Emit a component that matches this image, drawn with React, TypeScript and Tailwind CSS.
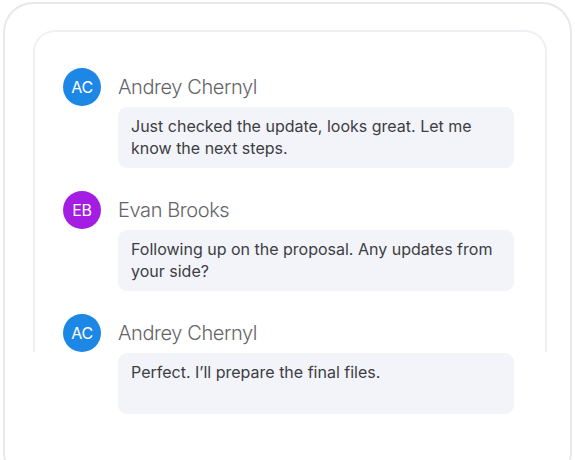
const messages = [
  {
    initials: 'AC',
    name: 'Andrey Chernyl',
    color: 'bg-[#1d87e6]',
    text: 'Just checked the update, looks great. Let me know the next steps.',
  },
  {
    initials: 'EB',
    name: 'Evan Brooks',
    color: 'bg-[#a41de3]',
    text: 'Following up on the proposal. Any updates from your side?',
  },
  {
    initials: 'AC',
    name: 'Andrey Chernyl',
    color: 'bg-[#1d87e6]',
    text: 'Perfect. I\u2019ll prepare the final files.',
  },
]

function Message({ initials, name, color, text }: (typeof messages)[number]) {
  return (
    <div>
      <div className="flex items-center h-[38px] gap-[17px]">
        <div
          className={`${color} w-[38px] h-[38px] rounded-full flex items-center justify-center text-white text-[16px] tracking-tight`}
        >
          {initials}
        </div>
        <span className="text-[20px] font-light text-[#646469] tracking-[-0.4px]">{name}</span>
      </div>
      <div className="ml-[55px] mt-px h-[61px] rounded-[9px] bg-[#f2f4fa] px-[13px] pt-[8px] text-[16px] leading-[22px] text-[#3d3d42]">
        {text}
      </div>
    </div>
  )
}

export default function App() {
  return (
    <div className="w-[575px] h-[460px] bg-white overflow-hidden pt-[2px] px-[3px] font-['Inter',sans-serif]">
      <div className="h-[480px] rounded-[30px] border-2 border-b-0 border-[#e7e8ec] pl-[28px] pr-[23px] pt-[26px]">
        <div className="relative">
          <div className="absolute inset-x-0 top-0 h-[322px] rounded-t-[22px] border-2 border-b-0 border-[#eff0f4]" />
          <div className="relative flex flex-col gap-[23px] pl-[30px] pr-[33px] pt-[38px]">
            {messages.map((m, i) => (
              <Message key={i} {...m} />
            ))}
          </div>
        </div>
      </div>
    </div>
  )
}
